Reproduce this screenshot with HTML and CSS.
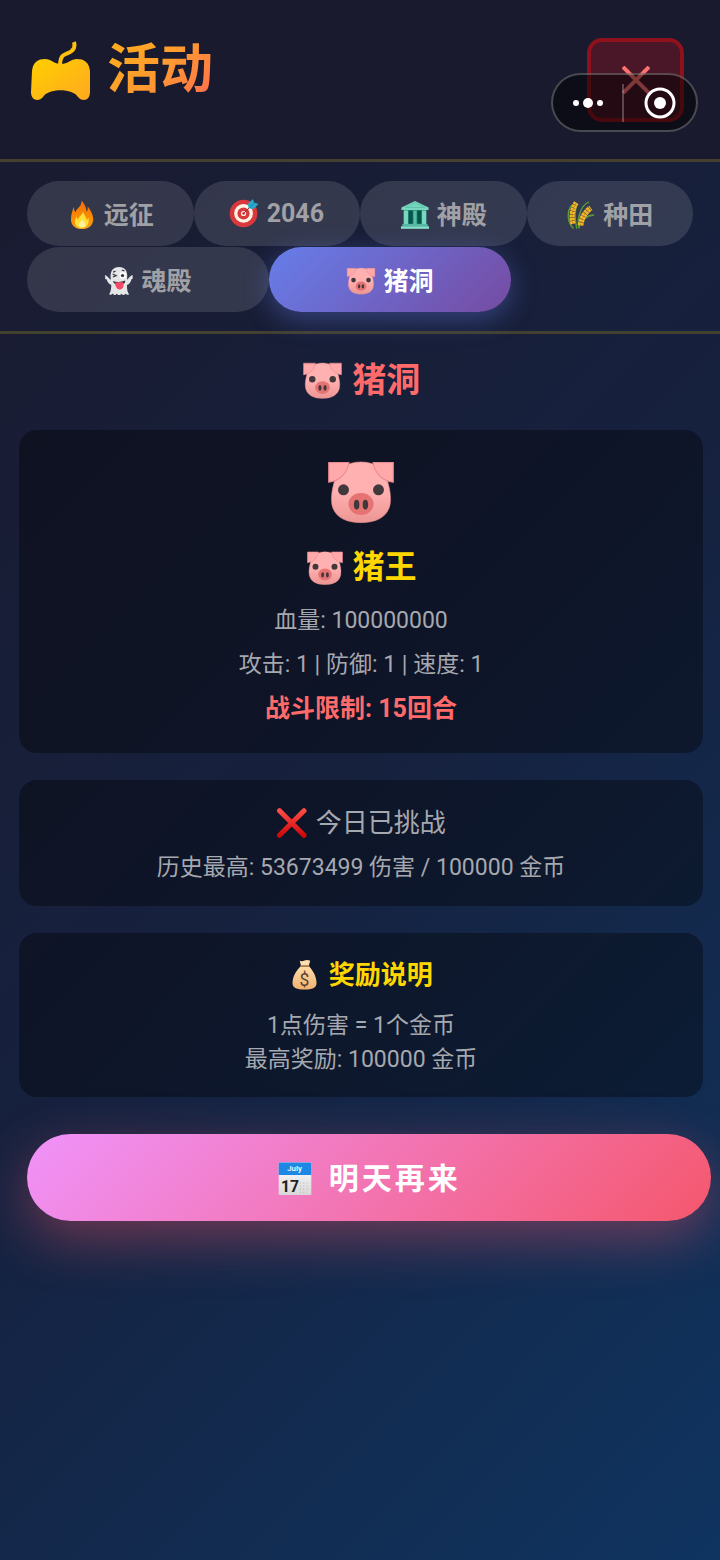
FILE: index.html
```html
<!DOCTYPE html>
<html lang="zh-CN">
<head>
<meta charset="UTF-8">
<meta name="viewport" content="width=device-width, initial-scale=1">
<title>活动</title>
<link rel="stylesheet" href="styles.css">
</head>
<body>
<svg class="sprites" width="0" height="0" aria-hidden="true">
  <defs>
    <linearGradient id="gold" x1="0" y1="0" x2="1" y2="1"><stop offset="0" stop-color="#ffd000"/><stop offset="1" stop-color="#ffa820"/></linearGradient>
    <linearGradient id="pink" x1="0" y1="0" x2="0" y2="1"><stop offset="0.5" stop-color="#ffb0b0"/><stop offset="1" stop-color="#ec9693"/></linearGradient>
    <linearGradient id="flame" x1="0" y1="0" x2="0" y2="1"><stop offset="0" stop-color="#f36b0c"/><stop offset="0.6" stop-color="#fb8c00"/><stop offset="1" stop-color="#f9a01b"/></linearGradient>
    <linearGradient id="cross" x1="0" y1="0" x2="0" y2="1"><stop offset="0" stop-color="#ff4a45"/><stop offset="1" stop-color="#cf0a0a"/></linearGradient>
    <linearGradient id="bag" x1="0" y1="0" x2="0" y2="1"><stop offset="0" stop-color="#ffdca8"/><stop offset="1" stop-color="#efb36f"/></linearGradient>
    <linearGradient id="paper" x1="0" y1="0" x2="0" y2="1"><stop offset="0" stop-color="#ffffff"/><stop offset="1" stop-color="#d8d8d8"/></linearGradient>
  </defs>
  <symbol id="pig" viewBox="0 0 128 128">
    <path fill="url(#pink)" stroke="#e58b8b" stroke-width="1" d="M64 9C90 9 107 22 112 42C116 56 120 72 117 88C112 110 92 120 64 120C36 120 16 110 11 88C8 72 12 56 16 42C21 22 38 9 64 9Z"/>
    <path fill="#ffa9ab" stroke="#e98a90" stroke-width="2" d="M5 10H42C39 29 25 44 5 46ZM123 10H86C89 29 103 44 123 46Z"/>
    <circle cx="32" cy="60" r="10" fill="#40383a"/><circle cx="96" cy="60" r="10" fill="#40383a"/>
    <ellipse cx="64" cy="86" rx="23" ry="20" fill="#e57373"/>
    <ellipse cx="56" cy="87" rx="5" ry="9" fill="#40383a"/><ellipse cx="72" cy="87" rx="5" ry="9" fill="#40383a"/>
  </symbol>
  <symbol id="fire" viewBox="0 0 128 128">
    <path fill="url(#flame)" d="M62 2C76 18 84 34 83 50C87 48 90 40 88 28C100 42 112 64 112 84C110 110 90 124 64 124C36 124 17 108 17 84C17 64 22 48 29 30C30 42 33 50 38 52C36 36 64 32 62 2Z"/>
    <path fill="#ffe03a" d="M67 50C76 66 82 74 84 86C88 83 90 79 91 74C98 100 84 120 64 120C42 120 33 106 34 90C35 82 38 75 41 71C42 78 45 82 49 83C49 69 66 66 67 50Z"/>
    <path fill="#fff29a" d="M64 82C76 94 80 103 77 110C71 119 56 119 51 110C46 100 62 96 64 82Z"/>
  </symbol>
  <symbol id="target" viewBox="0 0 128 128">
    <circle cx="62" cy="66" r="59" fill="#d9393d"/><circle cx="62" cy="66" r="40" fill="#fff3e3"/><circle cx="62" cy="66" r="26" fill="#d9393d"/><circle cx="62" cy="66" r="11" fill="#fff3e3"/><circle cx="62" cy="66" r="5" fill="#b71c1c"/>
    <path fill="none" stroke="#8d2630" stroke-width="4" d="M62 66L102 26"/>
    <path fill="#2aa9cc" d="M80 26L102 4L107 20L126 24L104 48L84 44Z"/><path fill="none" stroke="#0c7391" stroke-width="3" d="M86 43L112 17"/>
  </symbol>
  <symbol id="temple" viewBox="0 0 128 128">
    <path fill="#238071" d="M16 42H112V112H16Z"/>
    <path fill="#77d8c0" d="M64 4L122 32V43H6V32ZM16 45H34V104H16ZM94 45H112V104H94Z"/>
    <path fill="#58bda5" d="M57 45H71V104H57Z"/>
    <path fill="#055449" d="M38 48Q46 42 54 48V101H38ZM74 48Q82 42 90 48V101H74Z"/>
    <path fill="#54b8a2" d="M10 102H118V112H10Z"/><path fill="#86dfcb" d="M4 112H124V123H4Z"/>
    <path fill="none" stroke="#5fc2ac" stroke-width="4" d="M22 32L64 12L106 32Z"/>
  </symbol>
  <symbol id="rice" viewBox="0 0 128 128">
    <g fill="none" stroke="#589b3d" stroke-width="6"><path d="M32 122C2 90 4 46 26 20M56 122C46 88 58 26 98 8M54 120C64 88 84 66 120 64M46 122C36 80 38 40 48 14"/></g>
    <path fill="none" stroke="#f6b827" stroke-width="22" stroke-dasharray="12 2" d="M30 102C22 72 26 38 44 12"/>
    <path fill="none" stroke="#f6b827" stroke-width="24" stroke-dasharray="12 2" d="M62 108C66 78 82 50 106 34"/>
    <path fill="none" stroke="#a96812" stroke-width="3" stroke-dasharray="7 5" d="M30 102C22 72 26 38 44 12M62 108C66 78 82 50 106 34"/>
  </symbol>
  <symbol id="ghost" viewBox="0 0 128 128">
    <path fill="#e4e6e8" d="M64 4C38 4 27 22 28 48L29 59C22 54 18 45 8 40C1 38 3 46 7 48C1 51 6 57 11 57C14 70 23 79 31 81C31 99 29 108 23 119C22 125 32 123 38 117C43 127 50 125 54 118C60 126 70 126 75 118C80 126 87 124 90 118C97 124 108 125 106 119C99 109 98 96 98 81C108 77 116 67 117 56C123 55 126 50 121 47C126 42 122 38 117 41C109 45 105 54 98 59L99 48C101 22 90 4 64 4Z"/>
    <circle cx="80" cy="40" r="14" fill="#fff"/><circle cx="79" cy="41" r="7" fill="#373a3d"/>
    <path fill="none" stroke="#373a3d" stroke-width="5" d="M37 34L52 41L38 47M39 26L49 22M76 17L87 21"/>
    <path fill="#34343a" d="M38 64Q64 73 91 62Q91 80 67 82Q43 82 38 64Z"/><path fill="#f24b69" d="M47 71Q64 66 83 70V86Q78 102 66 100Q50 98 47 71Z"/>
  </symbol>
  <symbol id="cancel" viewBox="0 0 128 128"><path fill="none" stroke="url(#cross)" stroke-linecap="round" stroke-width="20" d="M14 15L112 113M112 15L14 113"/></symbol>
</svg>
<header class="header">
  <h1 class="brand">
    <svg class="brand-icon" viewBox="0 0 60 60" aria-hidden="true">
      <path fill="none" stroke="#ffc10c" stroke-width="4" d="M29 26C29 9 39 17 43 8Q44 5 43 2"/>
      <path fill="url(#gold)" d="M1 31C2 22 7 19 14 19C20 19 23 24 30 24C37 24 40 19 46 19C53 19 58 22 59 31L59 52C59 61 51 62 47 57C42 48 17 48 12 57C8 62 0 61 0 52Z"/>
    </svg>
    <span class="brand-text">活动</span>
  </h1>
  <button class="close" type="button" aria-label="关闭">
    <svg viewBox="0 0 28 28" aria-hidden="true"><path d="M1 1L27 27M27 1L1 27"/></svg>
  </button>
  <div class="capsule">
    <button class="capsule-button capsule-more" type="button" aria-label="更多">
      <svg viewBox="0 0 32 12" width="32" height="12" aria-hidden="true"><circle cx="4" cy="6" r="3"/><circle cx="16" cy="6" r="5"/><circle cx="28" cy="6" r="3"/></svg>
    </button>
    <button class="capsule-button capsule-exit" type="button" aria-label="退出">
      <svg viewBox="0 0 32 32" width="32" height="32" aria-hidden="true"><circle class="ring" cx="16" cy="16" r="14"/><circle cx="16" cy="16" r="6"/></svg>
    </button>
  </div>
</header>
<nav class="tabs">
  <button class="tab" type="button"><svg class="emoji"><use href="#fire"/></svg> 远征</button>
  <button class="tab" type="button"><svg class="emoji"><use href="#target"/></svg> 2046</button>
  <button class="tab" type="button"><svg class="emoji"><use href="#temple"/></svg> 神殿</button>
  <button class="tab" type="button"><svg class="emoji"><use href="#rice"/></svg> 种田</button>
  <button class="tab" type="button"><svg class="emoji"><use href="#ghost"/></svg> 魂殿</button>
  <button class="tab tab-active" type="button"><svg class="emoji"><use href="#pig"/></svg> 猪洞</button>
</nav>
<main class="content">
  <h2 class="section-title"><svg class="emoji"><use href="#pig"/></svg> 猪洞</h2>
  <section class="card boss">
    <svg class="boss-avatar" aria-hidden="true"><use href="#pig"/></svg>
    <h3 class="boss-name"><svg class="emoji"><use href="#pig"/></svg> 猪王</h3>
    <p class="stat">血量: 100000000</p>
    <p class="stat">攻击: 1 | 防御: 1 | 速度: 1</p>
    <p class="stat limit">战斗限制: 15回合</p>
  </section>
  <section class="card record">
    <p class="status"><svg class="emoji"><use href="#cancel"/></svg> 今日已挑战</p>
    <p class="stat">历史最高: 53673499 伤害 / 100000 金币</p>
  </section>
  <section class="card reward">
    <h3 class="reward-title"><svg class="emoji" viewBox="0 0 128 128">
      <path fill="url(#bag)" d="M47 29C22 53 14 78 14 96C14 117 32 122 62 122C92 122 110 117 110 96C110 77 102 53 80 29Z"/>
      <path fill="#ffe0ad" d="M43 7Q52 11 62 6Q72 2 85 7L79 27H48Z"/><path fill="none" stroke="#a9794a" stroke-linecap="round" stroke-width="6" d="M47 29H80"/>
      <text x="62" y="107" class="dollar">$</text>
    </svg> 奖励说明</h3>
    <p class="reward-line">1点伤害 = 1个金币</p>
    <p class="reward-line">最高奖励: 100000 金币</p>
  </section>
  <button class="action" type="button"><svg class="emoji" viewBox="0 0 128 128">
    <rect x="6" y="5" width="116" height="116" rx="5" fill="url(#paper)"/><path fill="#1e88e5" d="M11 5H117Q122 5 122 10V50H6V10Q6 5 11 5Z"/>
    <text x="62" y="37" class="month">July</text><text x="46" y="110" class="day">17</text>
    <path fill="none" stroke="#b5b5b5" stroke-width="4" stroke-dasharray="4 8" d="M81 78H118M81 89H118M81 100H118M81 111H106"/>
  </svg> 明天再来</button>
</main>
</body>
</html>
```

FILE: styles.css
```css
* { box-sizing: border-box; }

body {
  margin: 0;
  min-height: 100vh;
  overflow-x: hidden;
  font-family: Roboto, "Noto Sans CJK SC", sans-serif;
  color: #a6a8af;
  background: linear-gradient(135deg, #1a1a2e 0%, #16213e 50%, #0f3460 100%);
}

h1, h2, h3, p { margin: 0; }

button { font-family: inherit; border: 0; padding: 0; }

.sprites { position: absolute; }
.emoji { width: 30px; height: 30px; margin-right: 1px; vertical-align: -6px; }
.emoji text { letter-spacing: normal; text-anchor: middle; }
.month { font: 500 28px Roboto, sans-serif; fill: #fff; }
.day { font: 700 56px Roboto, sans-serif; fill: #222; }
.dollar { font: 400 70px Roboto, sans-serif; fill: #5b4134; }

.header {
  position: relative;
  display: flex;
  justify-content: space-between;
  align-items: flex-start;
  padding: 38px 36px 37px 31px;
  background: #1a1a2e;
  border-bottom: 3px solid #453f30;
}

.brand { display: flex; align-items: center; gap: 16px; line-height: 64px; font-size: 53px; }
.brand-icon { width: 60px; height: 60px; }
.brand-text {
  color: transparent;
  background: linear-gradient(135deg, #ffb01c 0%, #ff9a30 50%, #ff6b50 100%);
  background-clip: text;
  -webkit-background-clip: text;
}

.close {
  display: flex;
  align-items: center;
  justify-content: center;
  width: 97px;
  height: 84px;
  border: 4px solid #8e111c;
  border-radius: 15px;
  background: #491727;
}
.close svg { width: 28px; height: 28px; fill: none; stroke: #ff7070; stroke-width: 4; }

.capsule {
  position: absolute;
  top: 73px;
  right: 22px;
  display: flex;
  align-items: center;
  width: 147px;
  height: 59px;
  border: 2px solid rgba(255, 255, 255, 0.25);
  border-radius: 30px;
  background: rgba(0, 0, 0, 0.5);
}
.capsule-button { display: flex; flex: 1; height: 38px; align-items: center; justify-content: center; background: none; }
.capsule-more { flex: 0 0 69px; }
.capsule-button svg { fill: #fff; }
.capsule-exit { border-left: 2px solid rgba(255, 255, 255, 0.25); }
.capsule-button .ring { fill: none; stroke: #fff; stroke-width: 3; }

.tabs {
  display: flex;
  flex-wrap: wrap;
  row-gap: 1px;
  padding: 19px 27px;
  border-bottom: 3px solid #42402f;
}
.tab {
  flex: 1 0 160px;
  max-width: 242px;
  height: 65px;
  padding-bottom: 1px;
  border-radius: 33px;
  font-size: 25px;
  font-weight: 700;
  color: #a0a1a6;
  background: rgba(255, 255, 255, 0.12);
}
.tab-active {
  color: #fff;
  background: linear-gradient(135deg, #667eea, #764ba2);
  box-shadow: 0 7px 27px rgba(102, 126, 234, 0.4);
}

.content { padding: 20px 17px 37px 19px; text-align: center; }
.section-title { margin-bottom: 24px; font-size: 34px; line-height: 52px; color: #ff6b6b; }
.section-title .emoji { width: 41px; height: 41px; vertical-align: -9px; }

.card { margin-bottom: 27px; border-radius: 18px; background: rgba(0, 0, 0, 0.35); }
.boss { padding: 27px 20px 22px; }
.boss-avatar { display: block; width: 70px; height: 70px; margin: 0 auto; }
.boss-name { margin: 16px 0 8px; font-size: 32px; line-height: 48px; color: #ffd700; }
.boss-name .emoji { width: 38px; height: 38px; vertical-align: -9px; }
.stat { font-size: 23px; line-height: 44px; }
.limit { font-size: 25px; font-weight: 700; color: #ff6b6b; }
.record { padding: 21px 20px 16px; }
.status { font-size: 26px; line-height: 45px; }
.status .emoji { width: 32px; height: 32px; vertical-align: -7px; }
.reward { padding: 22px 20px 20px; }
.reward-title { margin-bottom: 14px; font-size: 26px; line-height: 40px; color: #ffd700; }
.reward-title .emoji { width: 32px; height: 32px; vertical-align: -7px; }
.reward-line { font-size: 23px; line-height: 34px; }

.action {
  width: 100%;
  height: 87px;
  margin: 10px 8px 0;
  padding-bottom: 3px;
  border-radius: 44px;
  font-size: 30px;
  font-weight: 700;
  letter-spacing: 3px;
  color: #fff;
  background: linear-gradient(135deg, #f093fb, #f5576c);
  box-shadow: 0 18px 54px rgba(245, 87, 108, 0.4);
}
.action .emoji { width: 36px; height: 36px; margin-right: 5px; vertical-align: -8px; }
```
